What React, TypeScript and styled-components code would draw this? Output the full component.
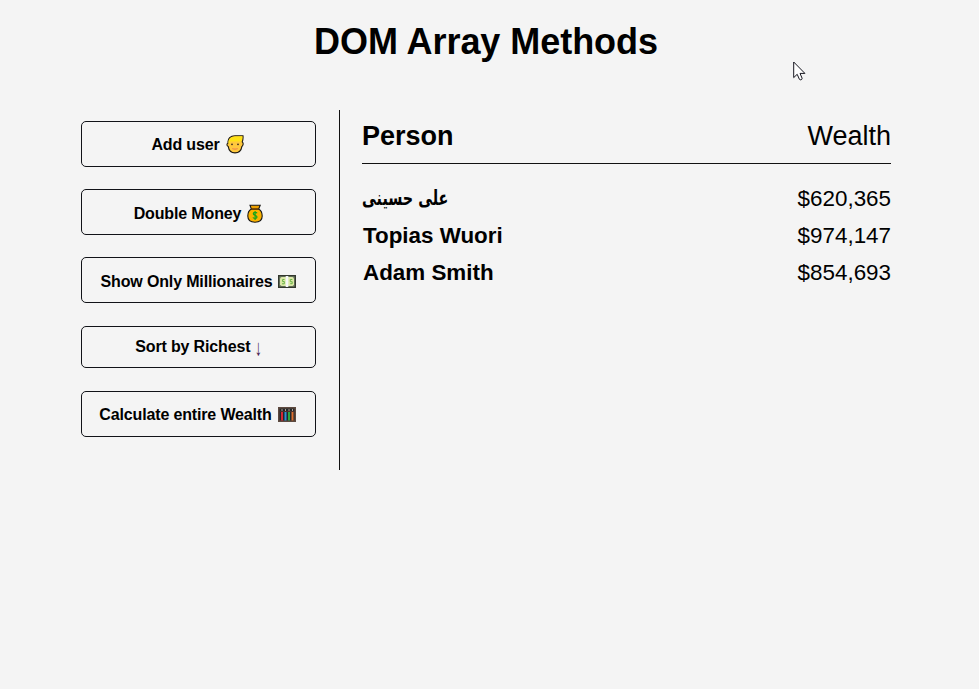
import React from "react";
import styled, { createGlobalStyle } from "styled-components";

const GlobalStyle = createGlobalStyle`
  * { box-sizing: border-box; }
  body {
    margin: 0;
    min-height: 100vh;
    background: #f4f4f4;
    color: #000;
    font-family: "Liberation Sans", Arial, sans-serif;
    overflow: hidden;
  }
`;

const Page = styled.div`
  position: relative;
  width: 979px;
  height: 689px;
  padding: 21px 88px 0 81px;
`;

const Title = styled.h1`
  margin: 0 0 47px;
  font-size: 36px;
  line-height: 42px;
  letter-spacing: -0.05px;
  text-align: center;
  white-space: nowrap;
`;

const Columns = styled.div`
  display: flex;
  height: 360px;
`;

const Actions = styled.aside`
  width: 259px;
  padding: 11px 23px 0 0;
  border-right: 1px solid #111;
  display: flex;
  flex-direction: column;
`;

const ActionButton = styled.button<{ $height?: number; $gap?: number; $drop?: number; $pull?: number }>`
  display: flex;
  align-items: center;
  justify-content: center;
  gap: 6px;
  width: 235px;
  height: ${(p) => p.$height ?? 46}px;
  margin: 0 0 ${(p) => p.$gap ?? 22}px;
  padding: ${(p) => p.$drop ?? 2}px ${(p) => p.$pull ?? 0}px 0 0;
  border: 1px solid #111318;
  border-radius: 5px;
  background: transparent;
  color: #000;
  font: bold 16px/18px "Liberation Sans", Arial, sans-serif;
  letter-spacing: -0.15px;
  white-space: nowrap;
  svg { flex: none; }
`;

const Arrow = styled.span`
  font: normal 17px/18px "Liberation Serif", serif;
  color: #4a2350;
  margin: 4px -1px 0 -2px;
  transform: scale(0.85, 1.3);
`;

const Ledger = styled.main`
  flex: 1;
  padding-left: 22px;
`;

const LedgerHeader = styled.div`
  display: flex;
  justify-content: space-between;
  height: 54px;
  margin-bottom: 16px;
  padding-top: 11px;
  border-bottom: 1px solid #111;
  font-size: 27px;
  line-height: 31px;
`;

const Row = styled.div`
  display: flex;
  justify-content: space-between;
  height: 37px;
  font-size: 22.4px;
  line-height: 37px;
`;

const Name = styled.strong`
  padding-left: 1px;
  white-space: nowrap;
`;

const ArabicName = styled(Name)`
  padding-left: 0;
  font-family: "DejaVu Sans", sans-serif;
  font-size: 20.5px;
  transform: scaleX(0.7);
  transform-origin: left center;
`;

const Pointer = styled.svg`
  position: absolute;
  left: 793px;
  top: 61px;
`;

const PersonIcon = () => (
  <svg width="18" height="19" viewBox="0 0 18 19">
    <path d="M2 8C1.500 3.500 4.500.8 9 .8c2.500 0 5-.2 8-.1.200 2.300.1 4.300-.8 6.200.9.7 1.100 1.500.9 2.500-.2 1-.5 1.700-1.200 2-.6 4-3.300 6.500-6.900 6.500s-6.200-2.500-6.800-6.500C.5 10.700.6 8.700 2 8z" fill="#ffc83d" stroke="#1d1a14" strokeWidth="1.100" />
    <path d="M2.500 8C2.200 4.500 4.500 1.500 9 1.400l7.300-.1c.1 2.200-.2 4.100-1.200 5.300H4.600L3.200 8.800z" fill="#ffe216" />
    <circle cx="6" cy="9.300" r=".9" fill="#3a2a20" />
    <circle cx="12" cy="9.300" r=".9" fill="#3a2a20" />
    <path d="M6.300 13.500q2.700 1.400 5.400 0" fill="none" stroke="#f0884d" strokeWidth="1.300" />
  </svg>
);

const MoneyBagIcon = () => (
  <svg width="16" height="19" viewBox="0 0 16 19">
    <path d="M4.500 5C1.500 6.500.8 9.500.8 12c0 4 3 6.200 7.200 6.200s7.200-2.200 7.200-6.200c0-2.500-.7-5.500-3.700-7z" fill="#fbb300" stroke="#171717" strokeWidth="1.100" />
    <path d="M3 1.200h10.200L11.700 5H4.300z" fill="#eda000" stroke="#171717" strokeWidth="1.100" />
    <path d="M4.500 5h7" stroke="#7b4300" strokeWidth="1.200" />
    <path d="M10 9.300C9.500 8 6.300 8 6.300 9.800s3.700 1.300 3.700 3.200-3.500 1.900-4 .4M8.100 7v9" fill="none" stroke="#16a51b" strokeWidth="1.200" />
  </svg>
);

const BanknoteIcon = () => (
  <svg width="18" height="13" viewBox="0 0 18 13">
    <rect x=".7" y=".7" width="16.600" height="11.600" fill="#7c8a70" stroke="#33382e" strokeWidth="1.400" />
    <path d="M2 3.500 3.500 2h11L16 3.500v6L14.500 11h-11L2 9.500z" fill="#dce9a8" />
    <path d="M6.500 4.500H4.600v2h1.700v2.300H4M14.300 4.500h-2v2.200h1.900v2h-2" fill="none" stroke="#6cb548" />
    <path d="M7.700 1h2.600v11H7.700z" fill="#f6f7f8" />
  </svg>
);

const AbacusIcon = () => (
  <svg width="18" height="15" viewBox="0 0 18 15">
    <rect x=".8" y=".8" width="16.400" height="13.400" fill="#22272a" stroke="#5d4a40" strokeWidth="1.600" />
    <path d="M4 2v3M7.500 2v3M11 2v3M14.500 2v3" stroke="#b09a8a" strokeWidth="1" />
    <g strokeWidth="2">
      <path d="M4 5v8.500" stroke="#d62735" />
      <path d="M7.500 5v8.500" stroke="#2e8fd6" />
      <path d="M11 5v8.500" stroke="#2aa83f" />
      <path d="M14.500 5v8.500" stroke="#df7030" />
    </g>
    <path d="M1.500 4.500h15" stroke="#4b302c" />
  </svg>
);

const people = [
  { name: "علی حسینی", wealth: "$620,365", arabic: true },
  { name: "Topias Wuori", wealth: "$974,147" },
  { name: "Adam Smith", wealth: "$854,693" },
];

export default function App() {
  return (
    <Page>
      <GlobalStyle />
      <Title>DOM Array Methods</Title>
      <Columns>
        <Actions>
          <ActionButton $drop={1} $pull={2}>Add user <PersonIcon /></ActionButton>
          <ActionButton $drop={3}>Double Money <MoneyBagIcon /></ActionButton>
          <ActionButton $gap={23} $drop={3}>Show Only Millionaires <BanknoteIcon /></ActionButton>
          <ActionButton $height={42} $gap={23} $drop={0}>Sort by Richest <Arrow>↓</Arrow></ActionButton>
          <ActionButton $drop={1} $pull={2}>Calculate entire Wealth <AbacusIcon /></ActionButton>
        </Actions>
        <Ledger>
          <LedgerHeader><strong>Person</strong><span>Wealth</span></LedgerHeader>
          {people.map((person) => (
            <Row key={person.name}>
              {person.arabic ? <ArabicName>{person.name}</ArabicName> : <Name>{person.name}</Name>}
              <span>{person.wealth}</span>
            </Row>
          ))}
        </Ledger>
      </Columns>
      <Pointer width="13" height="21" viewBox="0 0 13 21" aria-hidden="true">
        <path d="M.7 1v15.600l3.500-3.300 2.200 5c.6 1.200 3.200.3 2.700-1.100L7 12.400h4.900z" fill="#fff" stroke="#15151f" strokeWidth="1" />
      </Pointer>
    </Page>
  );
}
